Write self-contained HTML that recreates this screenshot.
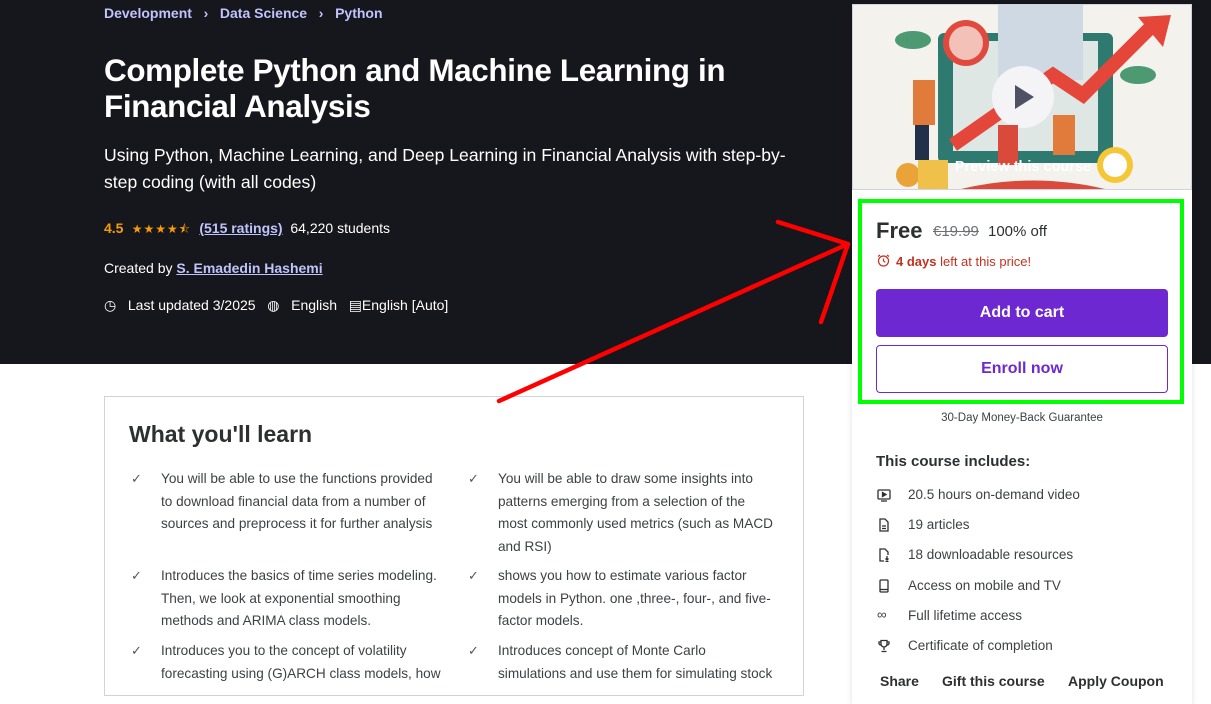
<!DOCTYPE html>
<html><head><meta charset="utf-8"><style>
*{margin:0;padding:0;box-sizing:border-box}
body{width:1211px;height:688px;overflow:hidden;background:#fff;font-family:"Liberation Sans",sans-serif;color:#2d2f31;position:relative}
.a{position:absolute;white-space:nowrap}
.hdr{position:absolute;left:0;top:0;width:1211px;height:364px;background:#16161d}
.w{color:#fff}
.li{font-size:13.6px;color:#3e4143;line-height:22.5px;white-space:normal;width:285px}
.r{width:278px}
.ck{font-size:13px;color:#555}
.inc{font-size:13.5px;color:#3e4143}
.ic{position:absolute;left:877px}
</style></head><body>
<div class="hdr"></div>
<div class="a" style="left:104px;top:5px;font-size:14px;font-weight:bold;color:#c0c4fc">Development&nbsp;&nbsp;&nbsp;›&nbsp;&nbsp;&nbsp;Data Science&nbsp;&nbsp;&nbsp;›&nbsp;&nbsp;&nbsp;Python</div>
<div class="a w" style="left:104px;top:53px;font-size:31.4px;font-weight:bold;line-height:36px;letter-spacing:-0.35px">Complete Python and Machine Learning in<br>Financial Analysis</div>
<div class="a w" style="left:104px;top:142px;font-size:17.6px;line-height:27px">Using Python, Machine Learning, and Deep Learning in Financial Analysis with step-by-<br>step coding (with all codes)</div>
<div class="a" style="left:104px;top:220px;font-size:14px;"><b style="color:#f69c08">4.5</b> <span style="color:#f69c08;font-size:12px;letter-spacing:1px">&nbsp;★★★★⯪&nbsp;</span> <b style="color:#c0c4fc;text-decoration:underline">(515 ratings)</b>&nbsp; <span style="color:#fff">64,220 students</span></div>
<div class="a w" style="left:104px;top:260px;font-size:14px">Created by <b style="color:#c0c4fc;text-decoration:underline">S. Emadedin Hashemi</b></div>
<div class="a w" style="left:104px;top:297px;font-size:14px">◷&nbsp;&nbsp;&nbsp;Last updated 3/2025&nbsp;&nbsp;&nbsp;◍&nbsp;&nbsp;&nbsp;English&nbsp;&nbsp;&nbsp;▤English [Auto]</div>

<div style="position:absolute;left:104px;top:396px;width:700px;height:300px;border:1px solid #d1d2e0"></div>
<div class="a" style="left:129px;top:421px;font-size:23px;font-weight:bold;color:#2d2f31">What you'll learn</div>
<div class="a ck" style="left:131px;top:471px">✓</div><div class="a li" style="left:161px;top:468px">You will be able to use the functions provided to download financial data from a number of sources and preprocess it for further analysis</div>
<div class="a ck" style="left:468px;top:471px">✓</div><div class="a li r" style="left:498px;top:468px">You will be able to draw some insights into patterns emerging from a selection of the most commonly used metrics (such as MACD and RSI)</div>
<div class="a ck" style="left:131px;top:568px">✓</div><div class="a li" style="left:161px;top:565px">Introduces the basics of time series modeling. Then, we look at exponential smoothing methods and ARIMA class models.</div>
<div class="a ck" style="left:468px;top:568px">✓</div><div class="a li r" style="left:498px;top:565px">shows you how to estimate various factor models in Python. one ,three-, four-, and five-factor models.</div>
<div class="a ck" style="left:131px;top:643px">✓</div><div class="a li" style="left:161px;top:640px">Introduces you to the concept of volatility forecasting using (G)ARCH class models, how</div>
<div class="a ck" style="left:468px;top:643px">✓</div><div class="a li r" style="left:498px;top:640px">Introduces concept of Monte Carlo<br>simulations and use them for simulating stock</div>

<!-- card -->
<div style="position:absolute;left:852px;top:4px;width:340px;height:700px;background:#fff;box-shadow:0 2px 6px rgba(0,0,0,.12)"></div>
<div style="position:absolute;left:852px;top:4px;width:340px;height:186px;background:#f4f2ec;border:1px solid #d1d2e0;overflow:hidden">
<svg width="340" height="186" viewBox="0 0 340 186">
<rect x="85" y="28" width="175" height="130" rx="6" fill="#2f7a70"/>
<rect x="100" y="36" width="145" height="110" fill="#dfe7e4"/>
<rect x="145" y="0" width="85" height="75" fill="#cfd9e4"/>
<circle cx="113" cy="38" r="23" fill="#e04a3e"/><circle cx="113" cy="38" r="17" fill="#f3c1b8"/>
<path d="M100 140 L200 70 L230 90 L300 20" stroke="#e5463a" stroke-width="14" fill="none"/>
<path d="M285 12 L318 10 L310 42 Z" fill="#e5463a"/>
<circle cx="170" cy="92" r="31" fill="#f4f4f6"/>
<path d="M162 80 L162 104 L181 92 Z" fill="#505064"/>
<ellipse cx="60" cy="35" rx="18" ry="9" fill="#4d9a72"/>
<ellipse cx="285" cy="70" rx="18" ry="9" fill="#4d9a72"/>
<rect x="60" y="75" width="22" height="45" fill="#e07b3c"/><rect x="62" y="120" width="14" height="35" fill="#223049"/>
<rect x="200" y="110" width="22" height="40" fill="#e07b3c"/><rect x="145" y="120" width="20" height="40" fill="#d94a3b"/>
<circle cx="262" cy="160" r="18" fill="#f5c737"/><circle cx="262" cy="160" r="12" fill="#fff"/>
<circle cx="55" cy="170" r="12" fill="#e9a338"/><rect x="65" y="155" width="30" height="30" fill="#f0c14a"/>
<path d="M100 186 Q180 165 260 186Z" fill="#d94a3b"/>
<text x="170" y="166" text-anchor="middle" font-family="Liberation Sans" font-weight="bold" font-size="14.5" fill="#fff">Preview this course</text>
</svg></div>
<div class="a" style="left:876px;top:218px;font-size:22px;font-weight:bold;color:#2d2f31">Free</div>
<div class="a" style="left:933px;top:223px;font-size:15px;color:#6a6f73;text-decoration:line-through">€19.99</div>
<div class="a" style="left:988px;top:223px;font-size:15px;color:#2d2f31">100% off</div>
<svg class="a" style="left:877px;top:254px" width="13" height="13" viewBox="0 0 13 13"><circle cx="6.5" cy="7" r="5" fill="none" stroke="#c4311f" stroke-width="1.2"/><path d="M6.5 4.5V7L8.3 8.3M1 2.5L3 1M12 2.5L10 1" stroke="#c4311f" stroke-width="1.2" fill="none"/></svg>
<div class="a" style="left:896px;top:254px;font-size:13px;color:#c4311f"><b>4 days</b> left at this price!</div>
<div style="position:absolute;left:876px;top:289px;width:292px;height:48px;background:#6d28d2;border-radius:4px;color:#fff;font-weight:bold;font-size:16px;text-align:center;line-height:48px">Add to cart</div>
<div style="position:absolute;left:876px;top:345px;width:292px;height:48px;border:1px solid #6d28d2;border-radius:4px;color:#6d28d2;font-weight:bold;font-size:16px;text-align:center;line-height:46px">Enroll now</div>
<div style="position:absolute;left:858px;top:199px;width:326px;height:205px;border:4px solid #00ff00"></div>
<div class="a" style="left:852px;top:412px;width:340px;text-align:center;font-size:11.5px;color:#3e4143">30-Day Money-Back Guarantee</div>
<div class="a" style="left:876px;top:453px;font-size:15px;font-weight:bold">This course includes:</div>
<svg class="ic" style="top:488px" width="14" height="14" viewBox="0 0 14 14" fill="none" stroke="#2d2f31" stroke-width="1.3"><rect x="1" y="2" width="12" height="9" rx="1"/><path d="M5.5 4.5V8.5L9 6.5Z" fill="#2d2f31"/><path d="M4 13H10"/></svg>
<div class="a inc" style="left:908px;top:487px">20.5 hours on-demand video</div>
<svg class="ic" style="top:518px" width="14" height="14" viewBox="0 0 14 14" fill="none" stroke="#2d2f31" stroke-width="1.3"><path d="M3 1H8L11 4V13H3Z M5 8H9 M5 10.5H9"/></svg>
<div class="a inc" style="left:908px;top:517px">19 articles</div>
<svg class="ic" style="top:548px" width="14" height="14" viewBox="0 0 14 14" fill="none" stroke="#2d2f31" stroke-width="1.3"><path d="M7 13H3V1H8L11 4V7 M10 8V12 M8.5 10.5L10 12L11.5 10.5 M8.5 13.5H11.5"/></svg>
<div class="a inc" style="left:908px;top:547px">18 downloadable resources</div>
<svg class="ic" style="top:579px" width="14" height="14" viewBox="0 0 14 14" fill="none" stroke="#2d2f31" stroke-width="1.3"><rect x="3" y="1" width="8" height="12" rx="1"/><path d="M3 10.5H11"/></svg>
<div class="a inc" style="left:908px;top:578px">Access on mobile and TV</div>
<div class="a inc" style="left:877px;top:607px">∞</div><div class="a inc" style="left:908px;top:608px">Full lifetime access</div>
<svg class="ic" style="top:639px" width="14" height="14" viewBox="0 0 14 14" fill="none" stroke="#2d2f31" stroke-width="1.3"><path d="M4 1.5H10V5A3 3 0 0 1 4 5Z M4 3H2V4.5A2 2 0 0 0 4 6 M10 3H12V4.5A2 2 0 0 1 10 6 M7 8V11 M4.5 12.5H9.5"/></svg>
<div class="a inc" style="left:908px;top:638px">Certificate of completion</div>
<div class="a" style="left:880px;top:673px;font-size:14px;font-weight:bold">Share</div>
<div class="a" style="left:942px;top:673px;font-size:14px;font-weight:bold">Gift this course</div>
<div class="a" style="left:1068px;top:673px;font-size:14px;font-weight:bold">Apply Coupon</div>

<svg class="a" style="left:0;top:0" width="1211" height="688">
<path d="M499 401 L848 244 M848 244 L778 222 M848 244 L821 322" stroke="#ff0000" stroke-width="4.5" fill="none" stroke-linecap="round"/>
</svg>
</body></html>
